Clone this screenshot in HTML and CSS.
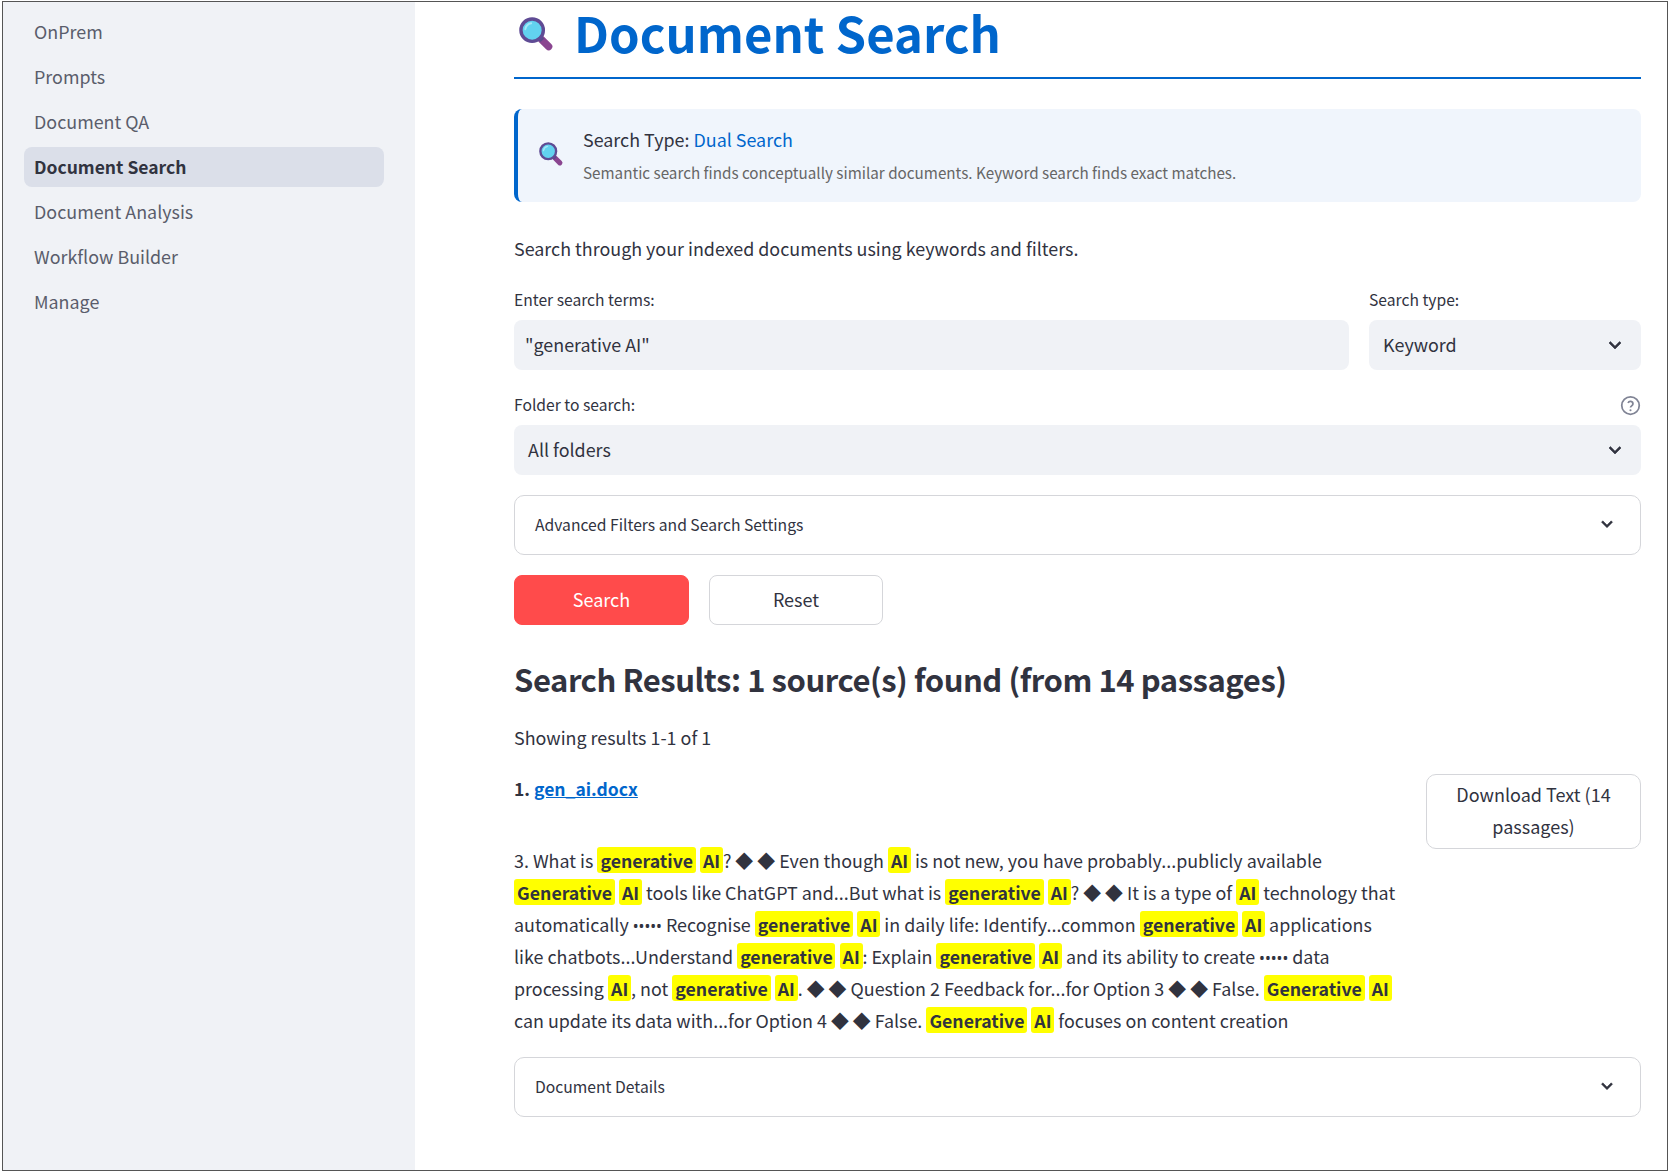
FILE: index.html
```html
<!DOCTYPE html>
<html lang="en">
<head>
<meta charset="utf-8">
<title>Document Search</title>
<link rel="stylesheet" href="styles.css">
</head>
<body>
<svg class="defs" width="0" height="0" aria-hidden="true">
  <symbol id="lens" viewBox="0 0 38 38">
    <path d="M23 23 L30.5 30.5" stroke="#8a4590" stroke-width="7.5" stroke-linecap="round"/>
    <path d="M21 21 L24 24" stroke="#5b4a8c" stroke-width="5"/>
    <circle cx="13.5" cy="13.5" r="11.5" fill="#62d2ef" stroke="#5f4b94" stroke-width="3.5"/>
    <path d="M6.5 12.5 A7.5 7.5 0 0 1 12.5 6.5" stroke="#a5e8f8" stroke-width="2" fill="none" stroke-linecap="round"/>
  </symbol>
  <symbol id="chev" viewBox="0 0 24 24">
    <path d="M16.59 8.59 12 13.17 7.41 8.59 6 10l6 6 6-6z" fill="#31333f" stroke="#31333f" stroke-width=".6"/>
  </symbol>
</svg>
<div class="app">
  <nav class="sidebar">
    <a class="nav-item">OnPrem</a>
    <a class="nav-item">Prompts</a>
    <a class="nav-item">Document QA</a>
    <a class="nav-item active">Document Search</a>
    <a class="nav-item">Document Analysis</a>
    <a class="nav-item">Workflow Builder</a>
    <a class="nav-item">Manage</a>
  </nav>
  <main class="main">
    <h1 class="title"><svg class="title-icon"><use href="#lens"/></svg><span>Document Search</span></h1>
    <section class="info">
      <svg class="info-icon"><use href="#lens"/></svg>
      <div class="info-text">
        <div class="info-head">Search Type: <span class="blue">Dual Search</span></div>
        <div class="info-sub">Semantic search finds conceptually similar documents. Keyword search finds exact matches.</div>
      </div>
    </section>
    <p class="intro">Search through your indexed documents using keywords and filters.</p>
    <div class="row-fields">
      <div class="field">
        <label class="label">Enter search terms:</label>
        <div class="control input">"generative AI"</div>
      </div>
      <div class="field">
        <label class="label">Search type:</label>
        <div class="control select"><span class="select-value">Keyword</span><svg class="chev"><use href="#chev"/></svg></div>
      </div>
    </div>
    <div class="field folder">
      <div class="label-row">
        <label class="label">Folder to search:</label>
        <svg class="help" viewBox="0 0 24 24"><circle cx="12" cy="12" r="10" fill="none" stroke="#808495" stroke-width="2"/><path d="M9.2 9.2a2.9 2.9 0 0 1 5.6 1c0 1.9-2.8 2.4-2.8 4" fill="none" stroke="#808495" stroke-width="2"/><circle cx="12" cy="17.4" r="1.2" fill="#808495"/></svg>
      </div>
      <div class="control select"><span class="select-value">All folders</span><svg class="chev"><use href="#chev"/></svg></div>
    </div>
    <div class="expander adv"><span>Advanced Filters and Search Settings</span><svg class="chev-s"><use href="#chev"/></svg></div>
    <div class="buttons">
      <button class="btn primary">Search</button>
      <button class="btn">Reset</button>
    </div>
    <h2 class="results">Search Results: 1 source(s) found (from 14 passages)</h2>
    <p class="showing">Showing results 1-1 of 1</p>
    <div class="result">
      <div class="result-body">
        <p class="result-name"><b class="num">1.</b> <a class="file">gen_ai.docx</a></p>
        <p class="snippet">3. What is <mark>generative</mark> <mark>AI</mark>? ◆ ◆ Even though <mark>AI</mark> is not new, you have probably...publicly available <mark>Generative</mark> <mark>AI</mark> tools like ChatGPT and...But what is <mark>generative</mark> <mark>AI</mark>? ◆ ◆ It is a type of <mark>AI</mark> technology that automatically <span class="dots">•••••</span> Recognise <mark>generative</mark> <mark>AI</mark> in daily life: Identify...common <mark>generative</mark> <mark>AI</mark> applications like chatbots...Understand <mark>generative</mark> <mark>AI</mark>: Explain <mark>generative</mark> <mark>AI</mark> and its ability to create <span class="dots">•••••</span> data processing <mark>AI</mark>, not <mark>generative</mark> <mark>AI</mark>. ◆ ◆ Question 2 Feedback for...for Option 3 ◆ ◆ False. <mark>Generative</mark> <mark>AI</mark> can update its data with...for Option 4 ◆ ◆ False. <mark>Generative</mark> <mark>AI</mark> focuses on content creation</p>
      </div>
      <button class="btn download">Download Text (14 passages)</button>
    </div>
    <div class="expander"><span>Document Details</span><svg class="chev-s"><use href="#chev"/></svg></div>
  </main>
</div>
</body>
</html>
```

FILE: styles.css
```css
* { box-sizing: border-box; }
html, body { margin: 0; padding: 0; }
body {
  width: 1670px;
  height: 1172px;
  padding: 1px 2px;
  overflow: hidden;
  background: #fff;
  color: #31333f;
  font-family: "Noto Sans CJK SC", "Noto Sans", sans-serif;
  font-size: 17.9px;
}
.defs { position: absolute; }
.app {
  display: flex;
  width: 1666px;
  height: 1170px;
  border: 1px solid #555;
  overflow: hidden;
}
.sidebar {
  flex: 0 0 412px;
  background: #f0f2f6;
  padding: 10px 31px 0 21px;
  display: flex;
  flex-direction: column;
  gap: 5px;
}
.nav-item {
  height: 40px;
  line-height: 38px;
  padding-left: 10px;
  border-radius: 8px;
  color: #5a5d6b;
  font-size: 17.9px;
}
.nav-item.active {
  background: #dbdfe9;
  color: #31333f;
  font-weight: 700;
  font-size: 17.5px;
  line-height: 40px;
}
.main {
  flex: 1;
  padding: 0 26px 0 99px;
  display: flex;
  flex-direction: column;
  min-width: 0;
}
.title {
  margin: 0;
  height: 77px;
  border-bottom: 2px solid #0066cc;
  display: flex;
  align-items: flex-start;
  color: #0066cc;
  font-size: 49px;
  font-weight: 700;
  line-height: 60px;
}
.title-icon { width: 37px; height: 37px; margin: 15px 18px 0 5px; flex: none; }
.info {
  margin-top: 30px;
  height: 93px;
  background: #f0f5fc;
  border-left: 4px solid #0066cc;
  border-radius: 8px;
  display: flex;
  align-items: center;
  padding-left: 21px;
}
.info-icon { width: 26px; height: 26px; margin: 0 18px 1px 0; flex: none; }
.info-text { padding-bottom: 2px; }
.info-head { font-size: 17.9px; line-height: 26px; }
.info-sub { font-size: 15.22px; line-height: 24px; margin-top: 8px; color: #666; }
.blue { color: #0066cc; }
.intro { margin: 0; padding-top: 32px; font-size: 17.9px; line-height: 28px; height: 80px; }
.row-fields { display: grid; grid-template-columns: 835px 272px; gap: 20px; margin-top: 5px; }
.label { display: block; font-size: 15.65px; line-height: 26px; }
.field .control { margin-top: 7px; }
.control {
  height: 50px;
  border-radius: 8px;
  background: #f0f2f6;
  font-size: 17.9px;
  line-height: 48px;
  padding-left: 11px;
}
.select { display: flex; justify-content: space-between; align-items: center; padding: 0 14px; }
.select-value { padding-bottom: 2px; }
.chev { width: 24px; height: 24px; flex: none; }
.chev-s { width: 22px; height: 22px; flex: none; margin-bottom: 2px; }
.folder { margin-top: 22px; }
.label-row { display: flex; justify-content: space-between; align-items: center; }
.help { width: 21px; height: 21px; }
.expander {
  height: 60px;
  border: 1px solid #d5d6da;
  border-radius: 10px;
  padding: 0 22px 0 20px;
  display: flex;
  justify-content: space-between;
  align-items: center;
  font-size: 15.7px;
}
.expander span { padding-bottom: 2px; }
.adv { margin-top: 20px; }
.buttons { display: flex; gap: 20px; margin-top: 20px; }
.btn {
  font-family: inherit;
  width: 174px;
  height: 50px;
  background: #fff;
  color: #31333f;
  border: 1px solid #d5d6da;
  border-radius: 8px;
  font-size: 18px;
  padding: 0 0 2px;
}
.btn.primary { width: 175px; background: #ff4b4b; border-color: #ff4b4b; color: #fff; }
.results {
  margin: 29px 0 0;
  font-size: 31px;
  font-weight: 700;
  letter-spacing: -0.45px;
  line-height: 50px;
}
.showing { margin: 19px 0 0; font-size: 17.9px; line-height: 28px; }
.result { display: flex; gap: 20px; margin-top: 23px; }
.result-body { width: 884px; flex: none; margin-right: 8px; }
.result-name { margin: 0; font-size: 17.9px; line-height: 28px; }
.num { font-weight: 700; font-size: 17.5px; }
.file { color: #0066cc; text-decoration: underline; font-weight: 700; font-size: 17.5px; }
.snippet { margin: 41px 0 0; font-size: 17.9px; line-height: 32px; }
.dots { font-family: "Noto Sans", sans-serif; font-size: 15.5px; line-height: 0; }
mark {
  background: #ffff00;
  color: #31333f;
  font-weight: 700;
  font-size: 17.7px;
  padding: 0 2.8px 0 3.1px;
  border-radius: 3px;
}
.download { width: 215px; height: 75px; line-height: 32px; padding: 0 20px 4px; flex: none; border-radius: 10px; }
.result + .expander { margin-top: 21px; }
```
